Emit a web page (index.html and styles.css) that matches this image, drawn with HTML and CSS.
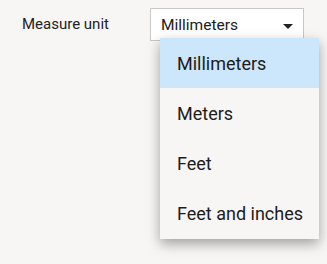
FILE: index.html
```html
<!DOCTYPE html>
<html lang="en">
  <head>
    <meta charset="UTF-8" />
    <title>Measure unit</title>
    <link rel="stylesheet" href="styles.css">
  </head>
  <body>
    <div class="field">
      <div class="label">Measure unit</div>
      <div class="select">
        <div class="select-box">
          <span>Millimeters</span>
          <svg class="arrow" width="10" height="5" viewBox="0 0 10 5"><path d="M0 0h10L5 5z" fill="#222"/></svg>
        </div>
        <div class="menu">
          <div class="option selected">Millimeters</div>
          <div class="option">Meters</div>
          <div class="option">Feet</div>
          <div class="option">Feet and inches</div>
        </div>
      </div>
    </div>
  </body>
</html>
```

FILE: styles.css
```css
* {
  margin: 0;
  padding: 0;
  box-sizing: border-box;
}

html,
body {
  height: 100%;
}

body {
  min-height: 264px;
  background-color: #f7f6f4;
  font-family: Roboto, sans-serif;
  color: #202020;
}

.field {
  display: flex;
  align-items: flex-start;
  padding: 8px 0 0 22px;
}

.label {
  width: 128px;
  font-size: 15px;
  line-height: 32px;
  color: #222222;
}

.select {
  position: relative;
}

.select-box {
  display: flex;
  justify-content: space-between;
  align-items: center;
  width: 154px;
  height: 33px;
  padding: 0 10px 0 10px;
  background-color: #ffffff;
  border: 1px solid #c8c8c8;
  font-size: 15.5px;
}

.arrow {
  margin-top: 3px;
}

.menu {
  position: absolute;
  top: 30px;
  left: 10px;
  display: flex;
  flex-direction: column;
  width: 159px;
  background-color: #f7f6f4;
  box-shadow: 0 5px 12px rgba(0, 0, 0, 0.35);
}

.option {
  height: 50px;
  line-height: 52px;
  padding-left: 17px;
  font-size: 18px;
  color: #1c1c1c;
}

.option:last-child {
  height: 51px;
}

.option.selected {
  background-color: #cce6fb;
}
```
